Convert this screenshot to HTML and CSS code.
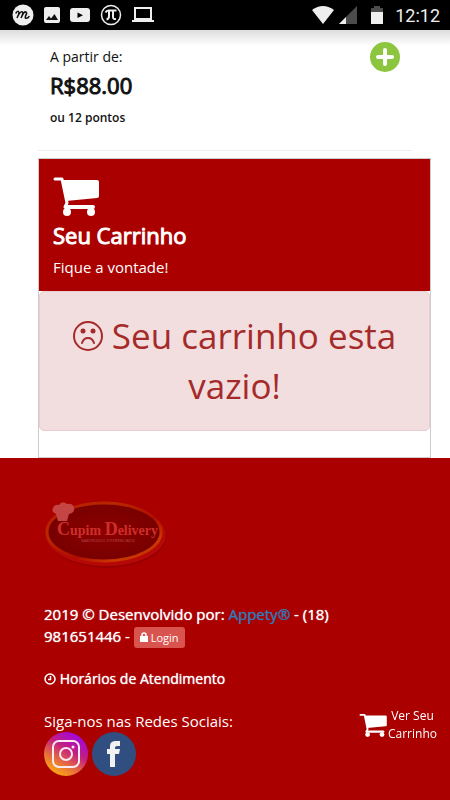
FILE: index.html
```
<!DOCTYPE html>
<html lang="pt-BR">
<head>
    <meta charset="UTF-8">
    <meta name="viewport" content="width=device-width, initial-scale=1.0">
    <title>Cupim Delivery</title>
    <link rel="stylesheet" href="styles.css">
</head>
<body>
    <svg class="sprite" aria-hidden="true">
        <symbol id="cart" viewBox="0 0 46 40">
            <path fill="none" stroke="#fff" stroke-width="3" stroke-linecap="round" stroke-linejoin="round" d="M2 3h7l5 24-2 4"/>
            <path fill="#fff" d="M9 4h35q2 0 2 2v14q0 2-2 2L13 25z"/>
            <path fill="none" stroke="#fff" stroke-width="4" stroke-linecap="round" d="M13 31h27"/>
            <circle fill="#fff" cx="14" cy="36" r="4"/>
            <circle fill="#fff" cx="38" cy="36" r="4"/>
        </symbol>
    </svg>

    <header class="status-bar">
        <div class="status-icons">
            <svg width="22" height="22" viewBox="0 0 22 22">
                <circle cx="11" cy="11" r="10.5" fill="#eee"/>
                <path d="M4 9q2-3 3-.5q0 2-2 5.5q3-7 5.5-6q1 1-1.5 6q3-7 5-6q1.5 1-.5 4q-1 3 1.5 2q1 0 2-1.5" fill="none" stroke="#111" stroke-width="1.5" stroke-linecap="round"/>
            </svg>
            <svg width="16" height="16" viewBox="0 0 16 16">
                <rect width="16" height="16" rx="2" fill="#eee"/>
                <path d="M2 13l3-4 2 2.5L10.5 7 14 13z" fill="#111"/>
            </svg>
            <svg width="20" height="14" viewBox="0 0 20 14">
                <rect width="20" height="14" rx="3" fill="#eee"/>
                <path d="M7.5 4.5v5.500l5.500-2.800z" fill="#000"/>
            </svg>
            <svg width="22" height="22" viewBox="0 0 22 22">
                <circle cx="11" cy="11" r="9.5" fill="none" stroke="#eee" stroke-width="1.5"/>
                <path d="M5.5 8.5q1-2 3-2h8M9 7v5q0 3-2.5 3.5M13 7v6q0 2.5 3 2" fill="none" stroke="#eee" stroke-width="2"/>
            </svg>
            <svg width="22" height="16" viewBox="0 0 22 16">
                <path d="M3 1h16v11H3z" fill="none" stroke="#eee" stroke-width="2"/>
                <path d="M0 13h22v2H0z" fill="#eee"/>
            </svg>
        </div>
        <div class="status-right">
            <svg width="22" height="18" viewBox="0 0 22 18">
                <path d="M0 4Q11-4 22 4L11 18z" fill="#eee"/>
            </svg>
            <svg class="signal" width="18" height="18" viewBox="0 0 18 18">
                <path d="M18 0v18H0z" fill="#4c4c4c"/>
                <path d="M7 11v7H0z" fill="#eee"/>
            </svg>
            <svg class="battery" width="12" height="18" viewBox="0 0 12 18">
                <path d="M3 0h6v2h3v16H0V2h3z" fill="#4c4c4c"/>
                <path d="M0 6h12v12H0z" fill="#eee"/>
            </svg>
            <span class="clock">12:12</span>
        </div>
    </header>

    <main class="content">
        <section class="product">
            <div>
                <p class="from">A partir de:</p>
                <p class="price">R$88.00</p>
                <p class="points">ou 12 pontos</p>
            </div>
            <button type="button" class="add-btn" aria-label="Adicionar">
                <svg width="30" height="30" viewBox="0 0 30 30">
                    <circle cx="15" cy="15" r="15" fill="#8cc63f"/>
                    <path d="M15 8v14M8 15h14" stroke="#fff" stroke-width="4" stroke-linecap="round"/>
                </svg>
            </button>
        </section>

        <section class="cart">
            <div class="cart-header">
                <svg class="cart-icon" width="46" height="40"><use href="#cart"/></svg>
                <h2>Seu Carrinho</h2>
                <p>Fique a vontade!</p>
            </div>
            <div class="alert">
                <svg class="frown" width="30" height="30" viewBox="0 0 30 30">
                    <g fill="none" stroke="#a52a2a" stroke-width="2">
                        <circle cx="15" cy="15" r="14"/>
                        <path d="M9 22q1.5-5 6-5t6 5" stroke-linecap="round"/>
                    </g>
                    <circle cx="10" cy="10" r="2.5" fill="#a52a2a"/>
                    <circle cx="20" cy="10" r="2.5" fill="#a52a2a"/>
                </svg>
                Seu carrinho esta vazio!
            </div>
        </section>
    </main>

    <footer class="footer">
        <svg class="logo" width="126" height="72" viewBox="0 0 126 72" role="img" aria-label="Cupim Delivery">
            <defs>
                <linearGradient id="rim" x1="0" y1="0" x2="1" y2="1">
                    <stop offset="0" stop-color="#b81900"/>
                    <stop offset=".3" stop-color="#b82800"/>
                    <stop offset=".6" stop-color="#b00c00"/>
                    <stop offset=".8" stop-color="#cc3a00"/>
                    <stop offset="1" stop-color="#b82400"/>
                </linearGradient>
                <radialGradient id="plate">
                    <stop offset="0" stop-color="#8c0000"/>
                    <stop offset="1" stop-color="#780000"/>
                </radialGradient>
            </defs>
            <ellipse cx="63" cy="36" rx="60" ry="32" fill="#980000"/>
            <ellipse cx="62" cy="35" rx="60" ry="31" fill="#b70808"/>
            <ellipse cx="60" cy="32" rx="57" ry="29" fill="url(#plate)" stroke="url(#rim)" stroke-width="3"/>
            <path d="M14 21l-2-7q-5-2-3-6t6-3q3-5 8-1q6-1 7 4t-5 6l-2 7z" fill="#c54545"/>
            <text x="13" y="35" class="logo-name"><tspan class="logo-cap">C</tspan>upim <tspan class="logo-cap">D</tspan>elivery</text>
            <text x="37" y="42" class="logo-tag">SABOROSO E DIFERENCIADO</text>
        </svg>

        <p class="credits">2019 © Desenvolvido por: <a href="#">Appety®</a> - (18) 981651446 -
            <button type="button" class="login-btn"><svg width="8" height="10" viewBox="0 0 8 10"><path d="M0 4h8v6H0z" fill="#fff"/><path d="M2 5V3q0-2 2-2t2 2v2" fill="none" stroke="#fff" stroke-width="1.5"/></svg> Login</button>
        </p>

        <p class="hours">
            <svg width="12" height="12" viewBox="0 0 12 12"><g fill="none" stroke="#fff" stroke-width="1.5"><circle cx="6" cy="6" r="5"/><path d="M6.5 3v3.5H4"/></g></svg>
            Horários de Atendimento
        </p>

        <p class="social-title">Siga-nos nas Redes Sociais:</p>
        <div class="social">
            <a href="#" aria-label="Instagram">
                <svg width="44" height="44" viewBox="0 0 44 44">
                    <defs>
                        <linearGradient id="insta" x1=".2" y1="1" x2=".8" y2="0">
                            <stop offset="0" stop-color="#ffb50a"/>
                            <stop offset=".3" stop-color="#e8703a"/>
                            <stop offset=".6" stop-color="#c42080"/>
                            <stop offset="1" stop-color="#9a00f0"/>
                        </linearGradient>
                    </defs>
                    <circle cx="22" cy="22" r="22" fill="url(#insta)"/>
                    <g fill="none" stroke="#fbe9f3" stroke-width="2">
                        <rect x="9" y="9" width="26" height="26" rx="6"/>
                        <circle cx="22" cy="22" r="6"/>
                    </g>
                    <circle cx="29" cy="15" r="1.5" fill="#fbe9f3"/>
                </svg>
            </a>
            <a href="#" aria-label="Facebook">
                <svg width="44" height="44" viewBox="0 0 44 44">
                    <circle cx="22" cy="22" r="22" fill="#314e80"/>
                    <path d="M18 35V22h-3v-5h3v-3q0-5 6-5h4v5h-3q-2 0-2 2v1h5l-1 5h-4v13z" fill="#f1f1f1"/>
                </svg>
            </a>
        </div>
    </footer>

    <a href="#" class="cart-link">
        <svg width="28" height="24"><use href="#cart"/></svg>
        <span>Ver Seu<br>Carrinho</span>
    </a>
</body>
</html>
```

FILE: styles.css
```
body {
    margin: 0;
    min-height: 100vh;
    display: flex;
    flex-direction: column;
    font-family: "Open Sans", sans-serif;
    font-size: 15px;
    color: #111;
    background-color: #fff;
}
p, h2 {
    margin: 0;
    font-weight: normal;
}
svg {
    flex: none;
}
.sprite {
    display: none;
}
.status-bar {
    display: flex;
    justify-content: space-between;
    align-items: center;
    height: 30px;
    padding: 0 10px 0 12px;
    background-color: #000;
    color: #eee;
}
.status-icons, .status-right {
    display: flex;
    align-items: center;
}
.status-icons {
    gap: 10px;
}
.signal {
    margin-left: 5px;
}
.battery {
    margin: 0 12px 0 14px;
}
.clock {
    font-family: Roboto, sans-serif;
    font-size: 18px;
}
.content {
    padding: 0 19px 0 38px;
    background: linear-gradient(#ddd, #fff 16px);
}
.product {
    display: flex;
    justify-content: space-between;
    align-items: flex-start;
    margin-right: 19px;
    padding: 12px 12px 22px;
    border-bottom: 1px solid #eee;
}
.from {
    font-size: 14px;
    line-height: 30px;
}
/* the headings are the regular face, thickened a little */
.price, .cart-header h2 {
    font-size: 22px;
    -webkit-text-stroke: 1px currentColor;
}
.price {
    line-height: 26px;
}
.points {
    margin-top: 10px;
    font-size: 12px;
    font-weight: 600;
    line-height: 20px;
}
.add-btn {
    padding: 0;
    border: none;
    background: none;
    cursor: pointer;
}
.add-btn svg {
    display: block;
}
.cart {
    margin-top: 7px;
    padding-bottom: 26px;
    border: 1px solid #ccc;
    background-color: #fff;
}
.cart-header {
    padding: 17px 14px 11px;
    background-color: #a00;
    color: #fff;
}
.cart-icon {
    display: block;
}
.cart-header h2 {
    line-height: 38px;
}
.cart-header p {
    line-height: 26px;
}
.alert {
    padding: 19px 15px;
    border: 1px solid #ebccd1;
    border-radius: 5px;
    background-color: #f2dede;
    color: #a52a2a;
    font-size: 35px;
    line-height: 50px;
    text-align: center;
}
.frown {
    vertical-align: -2px;
}
.footer {
    flex: 1;
    padding: 42px 60px 24px 44px;
    background-color: #a00;
    color: #fff;
}
.logo {
    display: block;
}
.logo-name {
    font-family: "Liberation Serif", serif;
    font-size: 14px;
    font-weight: bold;
    fill: #cf2e2a;
}
.logo-cap {
    font-size: 18px;
}
.logo-tag {
    font-size: 4px;
    fill: #b84a4a;
}
.credits {
    margin-top: 31px;
    line-height: 22px;
}
.credits, .hours {
    text-shadow: 0 0 1px currentColor;
}
.credits a {
    color: #337ab7;
    text-decoration: none;
}
.login-btn {
    padding: 2px 6px;
    border: none;
    border-radius: 3px;
    background-color: #d9534f;
    color: #fff;
    font-family: inherit;
    font-size: 11px;
    line-height: 17px;
    cursor: pointer;
}
.hours {
    margin-top: 20px;
    font-size: 14px;
    line-height: 22px;
}
.hours svg {
    vertical-align: -1px;
}
.social-title {
    margin-top: 20px;
    line-height: 22px;
}
.social {
    display: flex;
    gap: 4px;
}
.social svg {
    display: block;
}
.cart-link {
    position: fixed;
    right: 13px;
    bottom: 57px;
    display: flex;
    align-items: center;
    gap: 1px;
    color: #fff;
    font-size: 12px;
    line-height: 18px;
    text-align: center;
    text-decoration: none;
}
```
